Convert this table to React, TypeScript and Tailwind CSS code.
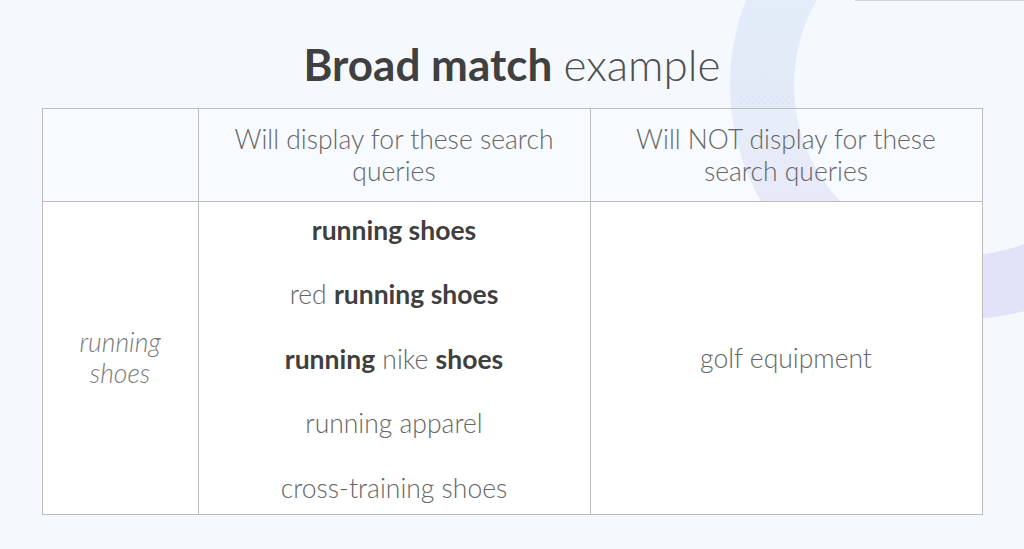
export default function App() {
  const matches = [
    <><b className="font-bold text-[#3f3f3f]">running shoes</b></>,
    <>red <b className="font-bold text-[#3f3f3f]">running shoes</b></>,
    <><b className="font-bold text-[#3f3f3f]">running</b> nike <b className="font-bold text-[#3f3f3f]">shoes</b></>,
    <>running apparel</>,
    <>cross-training shoes</>,
  ];

  return (
    <div className="relative h-[549px] w-full overflow-hidden bg-[#f5f9fe] font-['Lato',sans-serif]">
      {/* decorative ring */}
      <svg className="absolute left-[730px] top-[-149px]" width="468" height="468" viewBox="0 0 468 468">
        <defs>
          <linearGradient id="ring" x1="0" y1="0" x2="0" y2="1">
            <stop offset="0" stopColor="#e4eefa" />
            <stop offset="0.55" stopColor="#e2eaf8" />
            <stop offset="0.85" stopColor="#e2e3f8" />
            <stop offset="1" stopColor="#e2e3f8" />
          </linearGradient>
        </defs>
        <circle cx="234" cy="234" r="202" fill="none" stroke="url(#ring)" strokeWidth="64" />
      </svg>
      <svg className="absolute left-[738px] top-[95px]" width="54" height="10">
        {[0, 1, 2].map((r) =>
          [0, 1, 2, 3, 4, 5, 6, 7, 8].map((c) => (
            <circle key={`${r}-${c}`} cx={3 + c * 6 + (r % 2) * 3} cy={2 + r * 3} r="0.6" fill="#c9d3e3" />
          ))
        )}
      </svg>
      <div className="absolute left-[855px] top-0 h-px w-[169px] bg-[#d0d4da]" />

      <div className="relative flex flex-col items-center pt-[38px]">
        <h1 className="text-[44px] leading-[1.2] text-[#404040]">
          <span className="font-bold">Broad match</span>{" "}
          <span className="font-light text-[#505050]">example</span>
        </h1>

        <table className="mt-[17px] w-[940px] table-fixed border-collapse text-center text-[26.5px] font-light text-[#666]">
          <colgroup>
            <col className="w-[156px]" />
            <col className="w-[392px]" />
            <col className="w-[392px]" />
          </colgroup>
          <thead>
            <tr className="h-[93px] bg-white/20 leading-[32px]">
              <th className="border border-[#bcbcbc] font-light" />
              <th className="border border-[#bcbcbc] px-4 font-light">Will display for these search queries</th>
              <th className="border border-[#bcbcbc] px-8 font-light">Will NOT display for these search queries</th>
            </tr>
          </thead>
          <tbody className="bg-white">
            <tr>
              <td className="border border-[#bcbcbc] px-4 italic leading-[31px] text-[#7a7a7a]">
                running
                <br />
                shoes
              </td>
              <td className="border border-[#bcbcbc] pb-[10px] pt-[12px] leading-[32px]">
                <div className="flex flex-col gap-[32.5px]">
                  {matches.map((m, i) => (
                    <p key={i}>{m}</p>
                  ))}
                </div>
              </td>
              <td className="border border-[#bcbcbc] leading-[32px]">golf equipment</td>
            </tr>
          </tbody>
        </table>
      </div>
    </div>
  );
}
